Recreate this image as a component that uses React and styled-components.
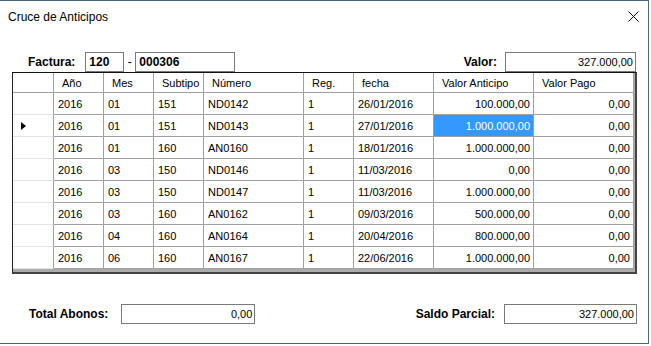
import React from 'react';
import styled, { createGlobalStyle } from 'styled-components';

const GlobalStyle = createGlobalStyle`
  html, body {
    margin: 0;
    padding: 0;
    background: #ffffff;
  }
  body {
    font-family: "Liberation Sans", Arial, sans-serif;
    color: #000;
  }
`;

const Window = styled.div`
  width: 649px;
  height: 344px;
  box-sizing: border-box;
  border-top: 1px solid #44688c;
  border-right: 1px solid #44688c;
  border-bottom: 1px solid #44688c;
  background: #fff;
  display: flex;
  flex-direction: column;
`;

const TitleBar = styled.div`
  height: 31px;
  display: flex;
  align-items: center;
  justify-content: space-between;
  padding: 0 9px 0 8px;
  font-size: 12px;
`;

const CloseButton = styled.div`
  width: 11px;
  height: 11px;
  display: flex;
  margin-top: -1px;
`;

const Body = styled.div`
  padding: 20px 11px 0 12px;
  display: flex;
  flex-direction: column;
`;

const TopRow = styled.div`
  display: flex;
  justify-content: space-between;
  align-items: center;
  height: 20px;
`;

const Group = styled.div`
  display: flex;
  align-items: center;
  margin-left: ${({ $indent }) => $indent || 0}px;
  margin-right: ${({ $right }) => $right || 0}px;
`;

const Label = styled.span`
  font-size: 12px;
  font-weight: bold;
  margin-right: ${({ $gap }) => $gap}px;
`;

const Dash = styled.span`
  font-size: 12px;
  width: 11px;
  text-align: center;
`;

const Field = styled.div`
  width: ${({ $w }) => $w}px;
  height: 20px;
  box-sizing: border-box;
  border: 1px solid #7a7a7a;
  display: flex;
  align-items: center;
  justify-content: ${({ $right }) => ($right ? 'flex-end' : 'flex-start')};
  padding: 0 2px 0 3px;
  font-size: ${({ $bold }) => ($bold ? 12 : 11)}px;
  font-weight: ${({ $bold }) => ($bold ? 'bold' : 'normal')};
`;

const GridFrame = styled.div`
  width: 625px;
  box-sizing: border-box;
  background: #ababab;
  border-top: 1px solid #111;
  border-left: 1px solid #222;
  border-right: 2px solid #444;
  border-bottom: 2px solid #444;
  padding-bottom: 3px;
`;

const Grid = styled.div`
  display: grid;
  grid-template-columns: 41px 50px 50px 50px 100px 50px 80px 100px 100px;
  grid-auto-rows: 22px;
  grid-template-rows: 20px;
  font-size: 11px;
`;

const HeadCell = styled.div`
  box-sizing: border-box;
  background: #fff;
  border-right: 1px solid #a0a0a0;
  border-bottom: 1px solid #a0a0a0;
  padding-left: 8px;
  display: flex;
  align-items: center;
`;

const RowHead = styled.div`
  box-sizing: border-box;
  background: #fff;
  border-right: 1px solid #a0a0a0;
  border-bottom: 1px solid #e3e3e3;
  display: flex;
  align-items: center;
  padding-left: 8px;
`;

const Arrow = styled.span`
  width: 0;
  height: 0;
  border-top: 4px solid transparent;
  border-bottom: 4px solid transparent;
  border-left: 5px solid #000;
`;

const Cell = styled.div`
  box-sizing: border-box;
  background: ${({ $selected }) => ($selected ? '#3399ff' : '#fff')};
  color: ${({ $selected }) => ($selected ? '#fff' : '#000')};
  border-right: 1px solid #a0a0a0;
  border-bottom: 1px solid #a0a0a0;
  display: flex;
  align-items: center;
  justify-content: ${({ $right }) => ($right ? 'flex-end' : 'flex-start')};
  padding: 0 3px 0 4px;
  white-space: nowrap;
`;

const BottomRow = styled.div`
  display: flex;
  justify-content: space-between;
  align-items: center;
  height: 20px;
  margin-top: 30px;
`;

const headers = ['Año', 'Mes', 'Subtipo', 'Número', 'Reg.', 'fecha', 'Valor Anticipo', 'Valor Pago'];

const rows = [
  ['2016', '01', '151', 'ND0142', '1', '26/01/2016', '100.000,00', '0,00'],
  ['2016', '01', '151', 'ND0143', '1', '27/01/2016', '1.000.000,00', '0,00'],
  ['2016', '01', '160', 'AN0160', '1', '18/01/2016', '1.000.000,00', '0,00'],
  ['2016', '03', '150', 'ND0146', '1', '11/03/2016', '0,00', '0,00'],
  ['2016', '03', '150', 'ND0147', '1', '11/03/2016', '1.000.000,00', '0,00'],
  ['2016', '03', '160', 'AN0162', '1', '09/03/2016', '500.000,00', '0,00'],
  ['2016', '04', '160', 'AN0164', '1', '20/04/2016', '800.000,00', '0,00'],
  ['2016', '06', '160', 'AN0167', '1', '22/06/2016', '1.000.000,00', '0,00'],
];

const currentRow = 1;
const selectedCol = 6;

const App = () => {
  return (
    <>
      <GlobalStyle />
      <Window>
        <TitleBar>
          <span>Cruce de Anticipos</span>
          <CloseButton>
            <svg width="11" height="11" viewBox="0 0 11 11">
              <path d="M0.5 0.5 L10.5 10.5 M10.5 0.5 L0.5 10.5" stroke="#000" strokeWidth="1" fill="none" />
            </svg>
          </CloseButton>
        </TitleBar>
        <Body>
          <TopRow>
            <Group $indent={16}>
              <Label $gap={10}>Factura:</Label>
              <Field $w={39} $bold>120</Field>
              <Dash>-</Dash>
              <Field $w={100} $bold>000306</Field>
            </Group>
            <Group $right={1}>
              <Label $gap={8}>Valor:</Label>
              <Field $w={131} $right>327.000,00</Field>
            </Group>
          </TopRow>
          <GridFrame>
            <Grid>
              <HeadCell />
              {headers.map((h) => (
                <HeadCell key={h}>{h}</HeadCell>
              ))}
              {rows.map((row, r) => (
                <React.Fragment key={r}>
                  <RowHead>{r === currentRow && <Arrow />}</RowHead>
                  {row.map((v, c) => (
                    <Cell key={c} $right={c >= 6} $selected={r === currentRow && c === selectedCol}>
                      {v}
                    </Cell>
                  ))}
                </React.Fragment>
              ))}
            </Grid>
          </GridFrame>
          <BottomRow>
            <Group $indent={17}>
              <Label $gap={13}>Total Abonos:</Label>
              <Field $w={134} $right>0,00</Field>
            </Group>
            <Group>
              <Label $gap={9}>Saldo Parcial:</Label>
              <Field $w={133} $right>327.000,00</Field>
            </Group>
          </BottomRow>
        </Body>
      </Window>
    </>
  );
};

export default App;
